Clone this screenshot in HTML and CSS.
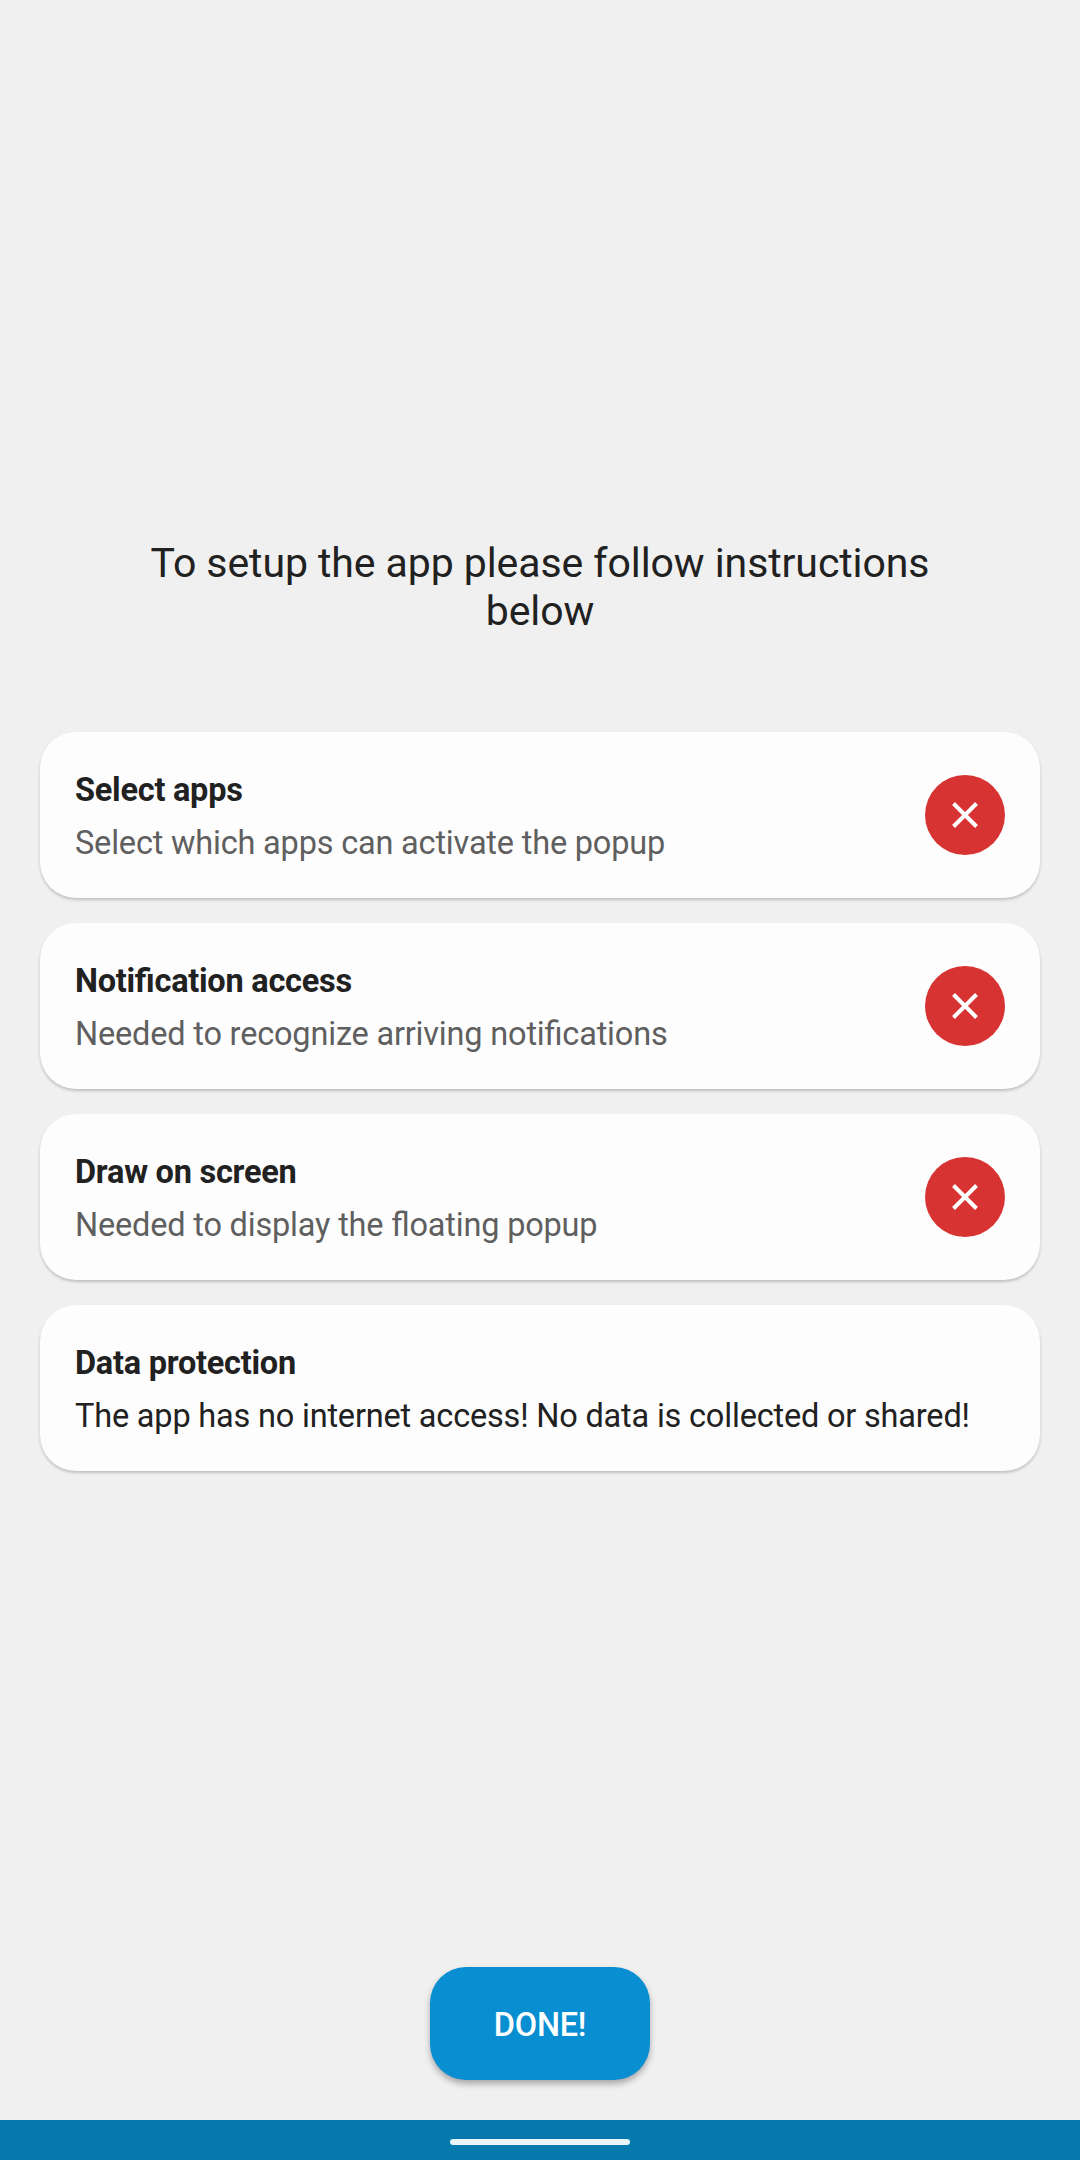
FILE: index.html
```html
<!DOCTYPE html>
<html lang="en">
<head>
  <meta charset="UTF-8" />
  <meta name="viewport" content="width=device-width, initial-scale=1" />
  <title>App setup</title>
  <link rel="stylesheet" href="styles.css">
</head>
<body>
  <main class="setup">
    <h1>To setup the app please follow instructions below</h1>

    <section class="cards">
      <div class="card">
        <div class="card-text">
          <h2>Select apps</h2>
          <p>Select which apps can activate the popup</p>
        </div>
        <span class="status">
          <svg viewBox="0 0 80 80"><path d="M28.5 28.5L51.5 51.5M51.5 28.5L28.5 51.5" /></svg>
        </span>
      </div>

      <div class="card">
        <div class="card-text">
          <h2>Notification access</h2>
          <p>Needed to recognize arriving notifications</p>
        </div>
        <span class="status">
          <svg viewBox="0 0 80 80"><path d="M28.5 28.5L51.5 51.5M51.5 28.5L28.5 51.5" /></svg>
        </span>
      </div>

      <div class="card">
        <div class="card-text">
          <h2>Draw on screen</h2>
          <p>Needed to display the floating popup</p>
        </div>
        <span class="status">
          <svg viewBox="0 0 80 80"><path d="M28.5 28.5L51.5 51.5M51.5 28.5L28.5 51.5" /></svg>
        </span>
      </div>

      <div class="card info">
        <div class="card-text">
          <h2>Data protection</h2>
          <p>The app has no internet access! No data is collected or shared!</p>
        </div>
      </div>
    </section>

    <button type="button" class="done">DONE!</button>
  </main>

  <footer class="nav-bar">
    <span class="handle"></span>
  </footer>
</body>
</html>
```

FILE: styles.css
```css
:root {
  --background: #f0f0f0;
  --card: #fdfdfd;
  --text: #212121;
  --text-light: #5f5f5f;
  --red: #d73333;
  --blue: #098ed1;
  --blue-dark: #0679ad;
}

* {
  box-sizing: border-box;
}

body {
  margin: 0;
  height: 2160px;
  display: flex;
  flex-direction: column;
  background-color: var(--background);
  color: var(--text);
  font-family: Roboto, sans-serif;
  font-feature-settings: 'liga' 1;
}

.setup {
  flex: 1;
  display: flex;
  flex-direction: column;
  align-items: center;
  padding: 539px 40px 40px;
}

h1 {
  width: 840px;
  margin: 0;
  font-size: 41px;
  font-weight: 400;
  letter-spacing: -0.08px;
  line-height: 48px;
  text-align: center;
}

.cards {
  width: 100%;
  margin-top: 97px;
  display: flex;
  flex-direction: column;
  gap: 25px;
}

.card {
  height: 166px;
  padding: 2px 35px 0;
  display: flex;
  align-items: center;
  justify-content: space-between;
  background-color: var(--card);
  border-radius: 36px;
  box-shadow: 0 2px 3px rgba(0, 0, 0, 0.2);
}

.card h2 {
  margin: 0 0 15px;
  font-size: 32.5px;
  font-weight: 700;
  letter-spacing: -0.25px;
  line-height: 38px;
}

.card p {
  margin: 0;
  color: var(--text-light);
  font-size: 32.5px;
  letter-spacing: -0.19px;
  line-height: 38px;
}

.card.info p {
  color: var(--text);
}

.status {
  width: 80px;
  height: 80px;
  margin-bottom: 2px;
  background-color: var(--red);
  border-radius: 50%;
}

.status svg {
  display: block;
  fill: none;
  stroke: #ffffff;
  stroke-width: 4;
}

.done {
  width: 220px;
  height: 113px;
  margin-top: auto;
  padding: 2px 0 0;
  background-color: var(--blue);
  color: #ffffff;
  border: none;
  border-radius: 36px;
  box-shadow: 0 4px 6px rgba(0, 0, 0, 0.3);
  font-family: inherit;
  font-size: 32.5px;
  font-weight: 500;
  letter-spacing: -0.25px;
}

.nav-bar {
  height: 40px;
  display: flex;
  align-items: center;
  justify-content: center;
  background-color: var(--blue-dark);
}

.handle {
  width: 180px;
  height: 6px;
  margin-top: 4px;
  background-color: #e9f4f9;
  border-radius: 3px;
}
```
